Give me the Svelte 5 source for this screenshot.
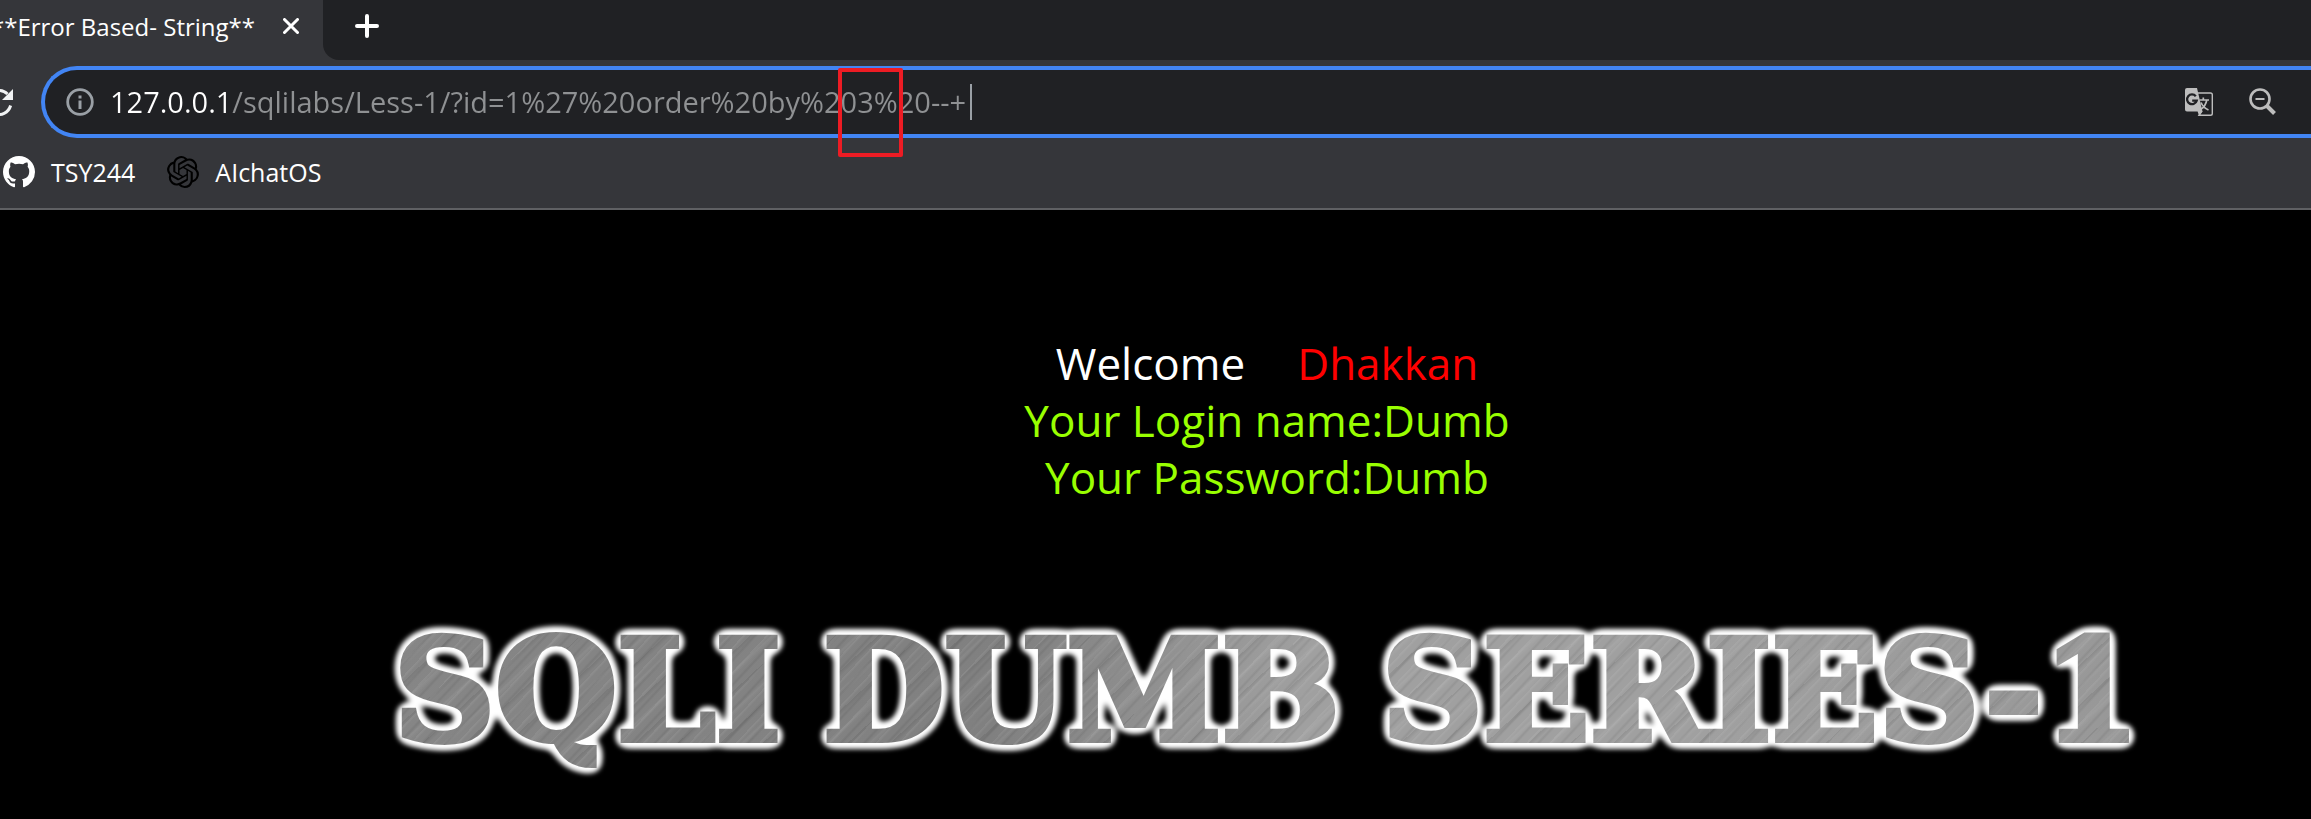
<script>
  const url = '127.0.0.1/sqlilabs/Less-1/?id=1%27%20order%20by%203%20--+';
  const words = ['SQLI', 'DUMB', 'SERIES-1'];
</script>

<div class="browser">
  <header class="chrome">
    <nav class="tabs" aria-label="Tabs">
      <div class="tab">
        <span class="tab-title">**Error Based- String**</span>
        <button class="icon-button" aria-label="Close tab">
          <svg width="16" height="16" viewBox="0 0 16 16"><path d="M1.500 1.500 14.500 14.500M14.500 1.500 1.500 14.500" stroke="#fff" stroke-width="3" stroke-linecap="round" /></svg>
        </button>
      </div>
      <div class="strip">
        <button class="icon-button" aria-label="New tab">
          <svg width="24" height="24" viewBox="0 0 24 24"><path d="M12 2V22M2 12H22" stroke="#fff" stroke-width="4" stroke-linecap="round" /></svg>
        </button>
      </div>
    </nav>

    <div class="toolbar">
      <button class="icon-button reload" aria-label="Reload">
        <svg width="28" height="28" viewBox="0 0 28 28">
          <path d="M22.500 6A12 12 0 1 0 25.600 17.500" fill="none" stroke="#f1f3f4" stroke-width="3" />
          <path d="M28 1V12H17Z" fill="#f1f3f4" />
        </svg>
      </button>
      <div class="omnibox">
        <button class="icon-button" aria-label="Site information">
          <svg width="28" height="28" viewBox="0 0 28 28">
            <circle cx="14" cy="14" r="12.300" fill="none" stroke="#9aa0a6" stroke-width="2.800" />
            <path d="M12.500 7.500h3v3h-3zM12.500 12.500h3v8.500h-3z" fill="#9aa0a6" />
          </svg>
        </button>
        <div class="address">
          <input type="text" value={url} aria-label="Address" spellcheck="false" />
          <span class="caret"></span>
          <span class="marker"></span>
        </div>
        <button class="icon-button" aria-label="Translate this page">
          <svg width="28" height="28" viewBox="0 0 28 28">
            <path d="M13 5H25.500a1.800 1.800 0 0 1 1.800 1.800V25.500a1.800 1.800 0 0 1-1.800 1.800H14L17 23" fill="none" stroke="#bdbdbd" stroke-width="1.400" />
            <path d="M2 0H12L17.500 23.500 14 27.500 12.600 23.500H2a2 2 0 0 1-2-2V2A2 2 0 0 1 2 0Z" fill="#bdbdbd" />
            <path d="M10.800 8.200A4.900 4.900 0 1 0 11.700 12.600H7.200" fill="none" stroke="#202124" stroke-width="2.300" />
            <path d="M14.500 12H24M18.300 9.500V12M21.800 12C21 16 18.500 19.500 16.200 21M16 14.500C17.500 18 20 20.500 23.500 22" fill="none" stroke="#bdbdbd" stroke-width="1.700" />
          </svg>
        </button>
        <button class="icon-button" aria-label="Zoom">
          <svg width="28" height="28" viewBox="0 0 28 28">
            <circle cx="11" cy="11" r="9.500" fill="none" stroke="#bdbdbd" stroke-width="2.600" />
            <path d="M6.500 11H15.500" stroke="#bdbdbd" stroke-width="2" />
            <path d="M18 18 25.500 25.500" stroke="#bdbdbd" stroke-width="4" />
          </svg>
        </button>
      </div>
    </div>

    <nav class="bookmarks" aria-label="Bookmarks">
      <a href="#tsy244">
        <svg width="32" height="32" viewBox="0 0 16 16" fill="#fff"><path d="M8 0C3.580 0 0 3.580 0 8c0 3.540 2.290 6.530 5.470 7.590.4.070.55-.17.55-.38 0-.19-.01-.82-.01-1.490-2.010.37-2.530-.49-2.690-.94-.09-.23-.48-.94-.82-1.130-.28-.15-.68-.52-.01-.53.63-.01 1.080.58 1.230.82.72 1.210 1.870.87 2.330.66.07-.52.28-.87.51-1.070-1.780-.2-3.640-.89-3.640-3.950 0-.87.31-1.590.82-2.150-.08-.2-.36-1.020.08-2.120 0 0 .67-.21 2.200.82.64-.18 1.320-.27 2-.27s1.360.09 2 .27c1.530-1.040 2.200-.82 2.200-.82.44 1.100.16 1.920.08 2.120.51.56.82 1.270.82 2.150 0 3.070-1.870 3.750-3.650 3.950.29.25.54.73.54 1.480 0 1.070-.01 1.930-.01 2.200 0 .21.15.46.55.38A8.010 8.010 0 0 0 16 8c0-4.420-3.580-8-8-8Z" /></svg>
        <span>TSY244</span>
      </a>
      <a href="#aichatos">
        <svg width="32" height="32" viewBox="0 0 24 24" fill="#000"><path d="M22.2819 9.8211a5.9847 5.9847 0 0 0-.5157-4.9108 6.0462 6.0462 0 0 0-6.5098-2.9A6.0651 6.0651 0 0 0 4.9807 4.1818a5.9847 5.9847 0 0 0-3.9977 2.9 6.0462 6.0462 0 0 0 .7427 7.0966 5.98 5.98 0 0 0 .511 4.9107 6.051 6.051 0 0 0 6.5146 2.9001A5.9847 5.9847 0 0 0 13.2599 24a6.0557 6.0557 0 0 0 5.7718-4.2058 5.9894 5.9894 0 0 0 3.9977-2.9001 6.0557 6.0557 0 0 0-.7475-7.0729zm-9.022 12.6081a4.4755 4.4755 0 0 1-2.8764-1.0408l.1419-.0804 4.7783-2.7582a.7948.7948 0 0 0 .3927-.6813v-6.7369l2.02 1.1686a.071.071 0 0 1 .038.052v5.5826a4.504 4.504 0 0 1-4.4945 4.4944zm-9.6607-4.1254a4.4708 4.4708 0 0 1-.5346-3.0137l.142.0852 4.783 2.7582a.7712.7712 0 0 0 .7806 0l5.8428-3.3685v2.3324a.0804.0804 0 0 1-.0332.0615L9.74 19.9502a4.4992 4.4992 0 0 1-6.1408-1.6464zM2.3408 7.8956a4.485 4.485 0 0 1 2.3655-1.9728V11.6a.7664.7664 0 0 0 .3879.6765l5.8144 3.3543-2.0201 1.1685a.0757.0757 0 0 1-.071 0l-4.8303-2.7865A4.504 4.504 0 0 1 2.3408 7.872zm16.5963 3.8558L13.1038 8.364 15.1192 7.2a.0757.0757 0 0 1 .071 0l4.8303 2.7913a4.4944 4.4944 0 0 1-.6765 8.1042v-5.6772a.79.79 0 0 0-.407-.667zm2.0107-3.0231l-.142-.0852-4.7735-2.7818a.7759.7759 0 0 0-.7854 0L9.409 9.2297V6.8974a.0662.0662 0 0 1 .0284-.0615l4.8303-2.7866a4.4992 4.4992 0 0 1 6.6802 4.66zM8.3065 12.863l-2.02-1.1638a.0804.0804 0 0 1-.038-.0567V6.0742a4.4992 4.4992 0 0 1 7.3757-3.4537l-.142.0805L8.704 5.459a.7948.7948 0 0 0-.3927.6813zm1.0976-2.3654l2.602-1.4998 2.6069 1.4998v2.9994l-2.5974 1.4997-2.6067-1.4997Z" /></svg>
        <span>AIchatOS</span>
      </a>
    </nav>
  </header>

  <main>
    <div class="message">
      <p class="welcome"><span>Welcome</span><span class="name">Dhakkan</span></p>
      <p>Your Login name:Dumb</p>
      <p>Your Password:Dumb</p>
    </div>
    <h1>
      {#each words as word}
        <span>{word}</span>
      {/each}
    </h1>
  </main>

  <svg class="defs" width="0" height="0" aria-hidden="true">
    <filter id="halo" x="-5%" y="-20%" width="110%" height="140%" color-interpolation-filters="sRGB">
      <feGaussianBlur in="SourceAlpha" stdDeviation="6" result="soft" />
      <feColorMatrix in="soft" values="0 0 0 0 1  0 0 0 0 1  0 0 0 0 1  0 0 0 9 -0.8" result="wide" />
      <feGaussianBlur in="wide" stdDeviation="2" result="glow" />
      <feMerge>
        <feMergeNode in="glow" />
        <feMergeNode in="SourceGraphic" />
      </feMerge>
    </filter>
  </svg>
</div>

<style>
  :global(body) {
    margin: 0;
    background: #000;
  }

  .browser {
    min-height: 100vh;
    overflow: hidden;
    background: #000;
    color: #fff;
    font-family: 'Open Sans', 'Noto Sans', sans-serif;
  }

  .chrome {
    background: #35363a;
    border-bottom: 2px solid #5f6063;
  }

  .icon-button {
    display: flex;
    flex: none;
    padding: 0;
    border: 0;
    background: none;
  }

  .tabs {
    display: flex;
    height: 60px;
  }

  .tab {
    display: flex;
    flex: none;
    align-items: center;
    justify-content: flex-end;
    gap: 28px;
    box-sizing: border-box;
    width: 323px;
    height: 52px;
    padding-right: 24px;
    font-size: 24px;
    white-space: nowrap;
  }

  .strip {
    display: flex;
    flex: 1;
    align-items: center;
    box-sizing: border-box;
    padding: 0 0 8px 32px;
    border-bottom-left-radius: 16px;
    background: #202124;
  }

  .toolbar {
    display: flex;
    align-items: center;
    gap: 28px;
    padding-top: 6px;
  }

  .reload {
    margin-left: -15px;
  }

  .omnibox {
    display: flex;
    flex: 1;
    align-items: center;
    gap: 36px;
    box-sizing: border-box;
    height: 72px;
    padding: 0 34px 0 21px;
    border: 4px solid #4285f4;
    border-right: 0;
    border-radius: 36px 0 0 36px;
    background: #202124;
  }

  .address {
    position: relative;
    display: flex;
    flex: 1;
    align-items: center;
    gap: 4px;
    min-width: 0;
    margin-left: -20px;
  }

  input {
    field-sizing: content;
    padding: 0;
    border: 0;
    outline: 0;
    background: linear-gradient(90deg, #fff 120px, #8f9193 120px);
    background-clip: text;
    color: transparent;
    font-family: inherit;
    font-size: 29px;
    line-height: 40px;
  }

  .caret {
    width: 2px;
    height: 36px;
    background: #9aa0a6;
  }

  .marker {
    position: absolute;
    top: -14px;
    left: 728px;
    box-sizing: border-box;
    width: 65px;
    height: 89px;
    border: 4px solid #ed1c24;
    border-radius: 2px;
  }

  .bookmarks {
    display: flex;
    gap: 32px;
    padding: 18px 3px 20px;
  }

  .bookmarks a {
    display: flex;
    align-items: center;
    gap: 16px;
    color: #fff;
    font-size: 25px;
    line-height: 32px;
    text-decoration: none;
  }

  main {
    display: flex;
    flex-direction: column;
    align-items: center;
    gap: 105px;
    padding: 125px 0 0 223px;
  }

  .message {
    color: #9f0;
    font-size: 44px;
    line-height: 57px;
    text-align: center;
  }

  .message p {
    margin: 0;
  }

  .message .welcome {
    display: flex;
    justify-content: center;
    gap: 52px;
    color: #fff;
  }

  .message .name {
    color: #f00;
  }

  h1 {
    display: flex;
    gap: 42px;
    margin: 0;
    background:
      repeating-linear-gradient(133deg, #fff1 0 1px, #0000 3px 7px, #0001 9px, #0000 11px 17px),
      repeating-linear-gradient(137deg, #0001 0 1px, #0000 4px 13px, #fff1 15px, #0000 19px 29px),
      linear-gradient(100deg, #868686, #808080 35%, #a0a0a0 52%, #a0a0a0 75%, #979797);
    background-clip: text;
    color: transparent;
    font-family: 'DejaVu Serif', serif;
    font-size: 140px;
    font-weight: 700;
    line-height: 160px;
    -webkit-text-stroke: 6px transparent;
    filter: url(#halo);
  }

  .defs {
    position: absolute;
  }
</style>
